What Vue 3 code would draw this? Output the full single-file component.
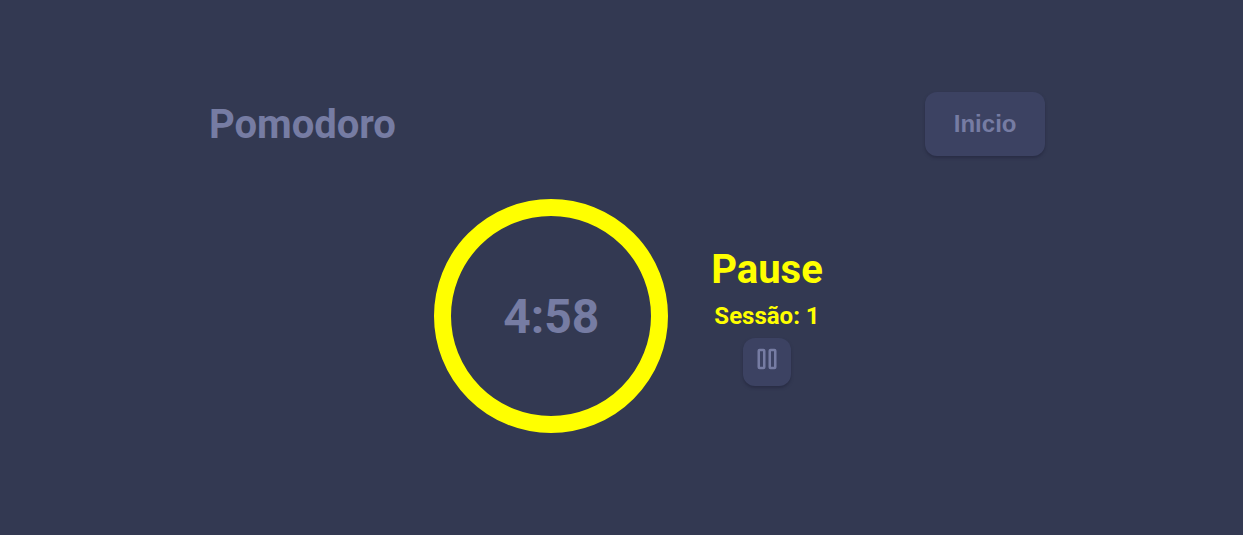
<script setup>
import { ref } from 'vue'

const time = ref('4:58')
const session = ref(1)
</script>

<template>
  <div class="page">
    <header class="header">
      <h1 class="title">Pomodoro</h1>
      <button type="button" class="button start">Inicio</button>
    </header>
    <main class="timer">
      <div class="ring">
        <span class="time">{{ time }}</span>
      </div>
      <section class="status">
        <h2 class="mode">Pause</h2>
        <p class="session">Sessão: {{ session }}</p>
        <button type="button" class="button toggle" aria-label="Pause">
          <svg class="icon" viewBox="0 0 20 22" fill="none" stroke="currentColor" stroke-width="2.5" aria-hidden="true">
            <rect x="1.75" y="2" width="5.5" height="18" rx="0.8" />
            <rect x="12.75" y="2" width="5.5" height="18" rx="0.8" />
          </svg>
        </button>
      </section>
    </main>
  </div>
</template>

<style>
body {
  margin: 0;
  background: #333952;
}
</style>

<style scoped>
.page {
  box-sizing: border-box;
  min-height: 100vh;
  padding: 92px calc(16% - 1px);
  background: #333952;
  color: #767ca3;
  font-family: Roboto, sans-serif;
  font-weight: 700;
}

.header {
  display: flex;
  align-items: center;
  justify-content: space-between;
  padding-left: 11px;
}

.title {
  margin: 0;
  padding-top: 2px;
  font-size: 40px;
  line-height: 48px;
}

.button {
  border: 0;
  border-radius: 12px;
  background: #3c4262;
  box-shadow: 0 2px 3px #292d45;
  color: #767ca3;
  font: inherit;
  cursor: pointer;
}

.start {
  width: 120px;
  height: 64px;
  padding: 0;
  font-family: "Liberation Sans", Arial, sans-serif;
  font-size: 24px;
}

.timer {
  display: flex;
  align-items: center;
  justify-content: center;
  gap: 43px;
  margin-top: 43px;
  padding-left: 14px;
}

.ring {
  box-sizing: border-box;
  display: flex;
  align-items: center;
  justify-content: center;
  width: 234px;
  height: 234px;
  border: 17px solid #ffff00;
  border-radius: 50%;
}

.time {
  padding-top: 2px;
  font-size: 48px;
  line-height: 56px;
}

.status {
  display: flex;
  flex-direction: column;
  align-items: center;
  color: #ffff00;
}

.mode {
  margin: 0;
  font-size: 40px;
  line-height: 48px;
}

.session {
  margin: 8px 0;
  font-size: 24px;
  line-height: 28px;
}

.toggle {
  display: flex;
  align-items: center;
  justify-content: center;
  width: 48px;
  height: 48px;
  padding: 0 0 6px;
}

.icon {
  width: 20px;
  height: 22px;
}
</style>
